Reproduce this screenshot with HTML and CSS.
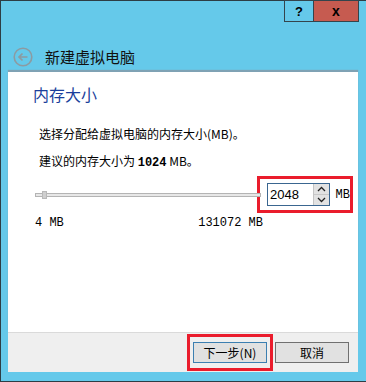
FILE: index.html
```html
<!DOCTYPE html>
<html>
<head lang="zh">
    <meta charset="UTF-8">
    <title>新建虚拟电脑</title>
    <link rel="stylesheet" href="styles.css">
</head>
<body>
<div class="window">
    <div class="titleBar">
        <span class="tbBtn help">?</span>
        <span class="tbBtn close">x</span>
    </div>
    <div class="header">
        <svg class="back" width="20" height="20" viewBox="0 0 20 20">
            <circle cx="10" cy="10" r="8.8" fill="none" stroke="#8c9ba2" stroke-width="1.6"/>
            <path d="M14.5 10H6M9.5 6.5L6 10l3.5 3.5" fill="none" stroke="#8c9ba2" stroke-width="1.7"/>
        </svg>
        <span class="title">新建虚拟电脑</span>
    </div>
    <div class="panel">
        <h1>内存大小</h1>
        <p class="line">选择分配给虚拟电脑的内存大小(MB)。</p>
        <p class="line">建议的内存大小为 <b>1024</b> MB。</p>
        <div class="sliderRow">
            <div class="track"><span class="thumb"></span></div>
            <div class="mark">
                <div class="spin">
                    <span class="value">2048</span>
                    <span class="arrows">
                        <span class="arrow">
                            <svg width="9" height="6" viewBox="0 0 9 6"><path d="M1 5L4.5 1.5 8 5" fill="none" stroke="#222" stroke-width="1.3"/></svg>
                        </span>
                        <span class="arrow">
                            <svg width="9" height="6" viewBox="0 0 9 6"><path d="M1 1l3.5 3.5L8 1" fill="none" stroke="#222" stroke-width="1.3"/></svg>
                        </span>
                    </span>
                </div>
                <span class="unit">MB</span>
            </div>
        </div>
        <div class="scale">
            <span>4 MB</span>
            <span>131072 MB</span>
        </div>
    </div>
    <div class="footer">
        <div class="markBtn">
            <span class="btn next">下一步(N)</span>
        </div>
        <span class="btn cancel">取消</span>
    </div>
</div>
</body>
</html>
```

FILE: styles.css
```css
*{
    padding: 0;
    margin: 0;
    box-sizing: border-box;
}
body{
    width: 366px;
    height: 382px;
    overflow: hidden;
    font-family: "Liberation Mono", "Noto Sans CJK SC", monospace;
    font-size: 12px;
    color: #000;
}
.window{
    width: 366px;
    height: 382px;
    background-color: #65c9ea;
    border-top: 1px solid #2d3d45;
    border-left: 1px solid #2d3d45;
    border-bottom: 1px solid #2d3d45;
    display: flex;
    flex-direction: column;
}
.titleBar{
    height: 21px;
    margin-top: -1px;
    display: flex;
    justify-content: flex-end;
    padding-right: 7px;
}
.tbBtn{
    height: 22px;
    border: 1px solid #34444c;
    display: flex;
    align-items: center;
    justify-content: center;
    font: bold 13px "Liberation Sans", sans-serif;
}
.help{
    width: 29px;
    border-right: none;
}
.close{
    width: 46px;
    background-color: #c65b50;
    font-size: 14px;
}
.header{
    height: 51px;
    display: flex;
    align-items: center;
    padding-left: 12px;
    padding-top: 20px;
}
.back{
    margin-right: 12px;
}
.title{
    font: 15px "Noto Sans CJK SC", sans-serif;
    color: #111;
}
.panel{
    margin: 0 8px 0 7px;
    height: 260px;
    background-color: #fff;
    box-shadow: 0 -2px 1px #7fa2b4;
    padding: 10px 0 0 25px;
}
h1{
    font: normal 16px "Noto Sans CJK SC", sans-serif;
    color: #1b3f9c;
    line-height: 24px;
}
.line{
    margin-left: 6px;
    font-family: "Noto Sans CJK SC", sans-serif;
    line-height: 17px;
    margin-top: 10px;
}
.line:first-of-type{
    margin-top: 19px;
}
.line b{
    font-family: "Liberation Mono", monospace;
}
.sliderRow{
    display: flex;
    align-items: center;
    margin-top: 4px;
    margin-left: 2px;
}
.track{
    flex: none;
    width: 226px;
    height: 4px;
    background-color: #e7e7e7;
    border: 1px solid #b4b4b4;
    position: relative;
}
.thumb{
    position: absolute;
    left: 6px;
    top: -3px;
    width: 5px;
    height: 8px;
    background-color: #cfcfcf;
    border: 1px solid #b9b9b9;
}
.mark{
    flex: none;
    margin-left: -4px;
    width: 96px;
    height: 37px;
    border: 3px solid #ea1c2c;
    display: flex;
    align-items: center;
    padding-left: 7px;
}
.spin{
    width: 64px;
    height: 23px;
    border: 1px solid #3a6690;
    display: flex;
    background-color: #fff;
}
.value{
    flex: 1;
    font: 13px "Liberation Sans", sans-serif;
    line-height: 21px;
    padding-left: 2px;
}
.arrows{
    width: 16px;
    background-color: #e2e2e2;
    border-left: 1px solid #c4c4c4;
    display: flex;
    flex-direction: column;
}
.arrow{
    flex: 1;
    display: flex;
    align-items: center;
    justify-content: center;
}
.arrow:first-child{
    border-bottom: 1px solid #c8c8c8;
}
.unit{
    margin-left: 6px;
}
.scale{
    width: 228px;
    margin-left: 2px;
    margin-top: 3px;
    display: flex;
    justify-content: space-between;
}
.footer{
    margin: 0 8px 0 7px;
    height: 40px;
    background-color: #efefef;
    border-top: 1px solid #dadada;
    display: flex;
    align-items: center;
    justify-content: flex-end;
    padding-right: 9px;
}
.markBtn{
    border: 3px solid #ea1c2c;
    padding: 5px 3px;
}
.btn{
    display: block;
    height: 21px;
    width: 74px;
    font-family: "Noto Sans CJK SC", sans-serif;
    font-size: 12px;
    line-height: 19px;
    text-align: center;
    background-color: #e1e1e1;
}
.next{
    border: 1px solid #3c7fb1;
}
.cancel{
    margin-left: 2px;
    border: 1px solid #707070;
}
```
